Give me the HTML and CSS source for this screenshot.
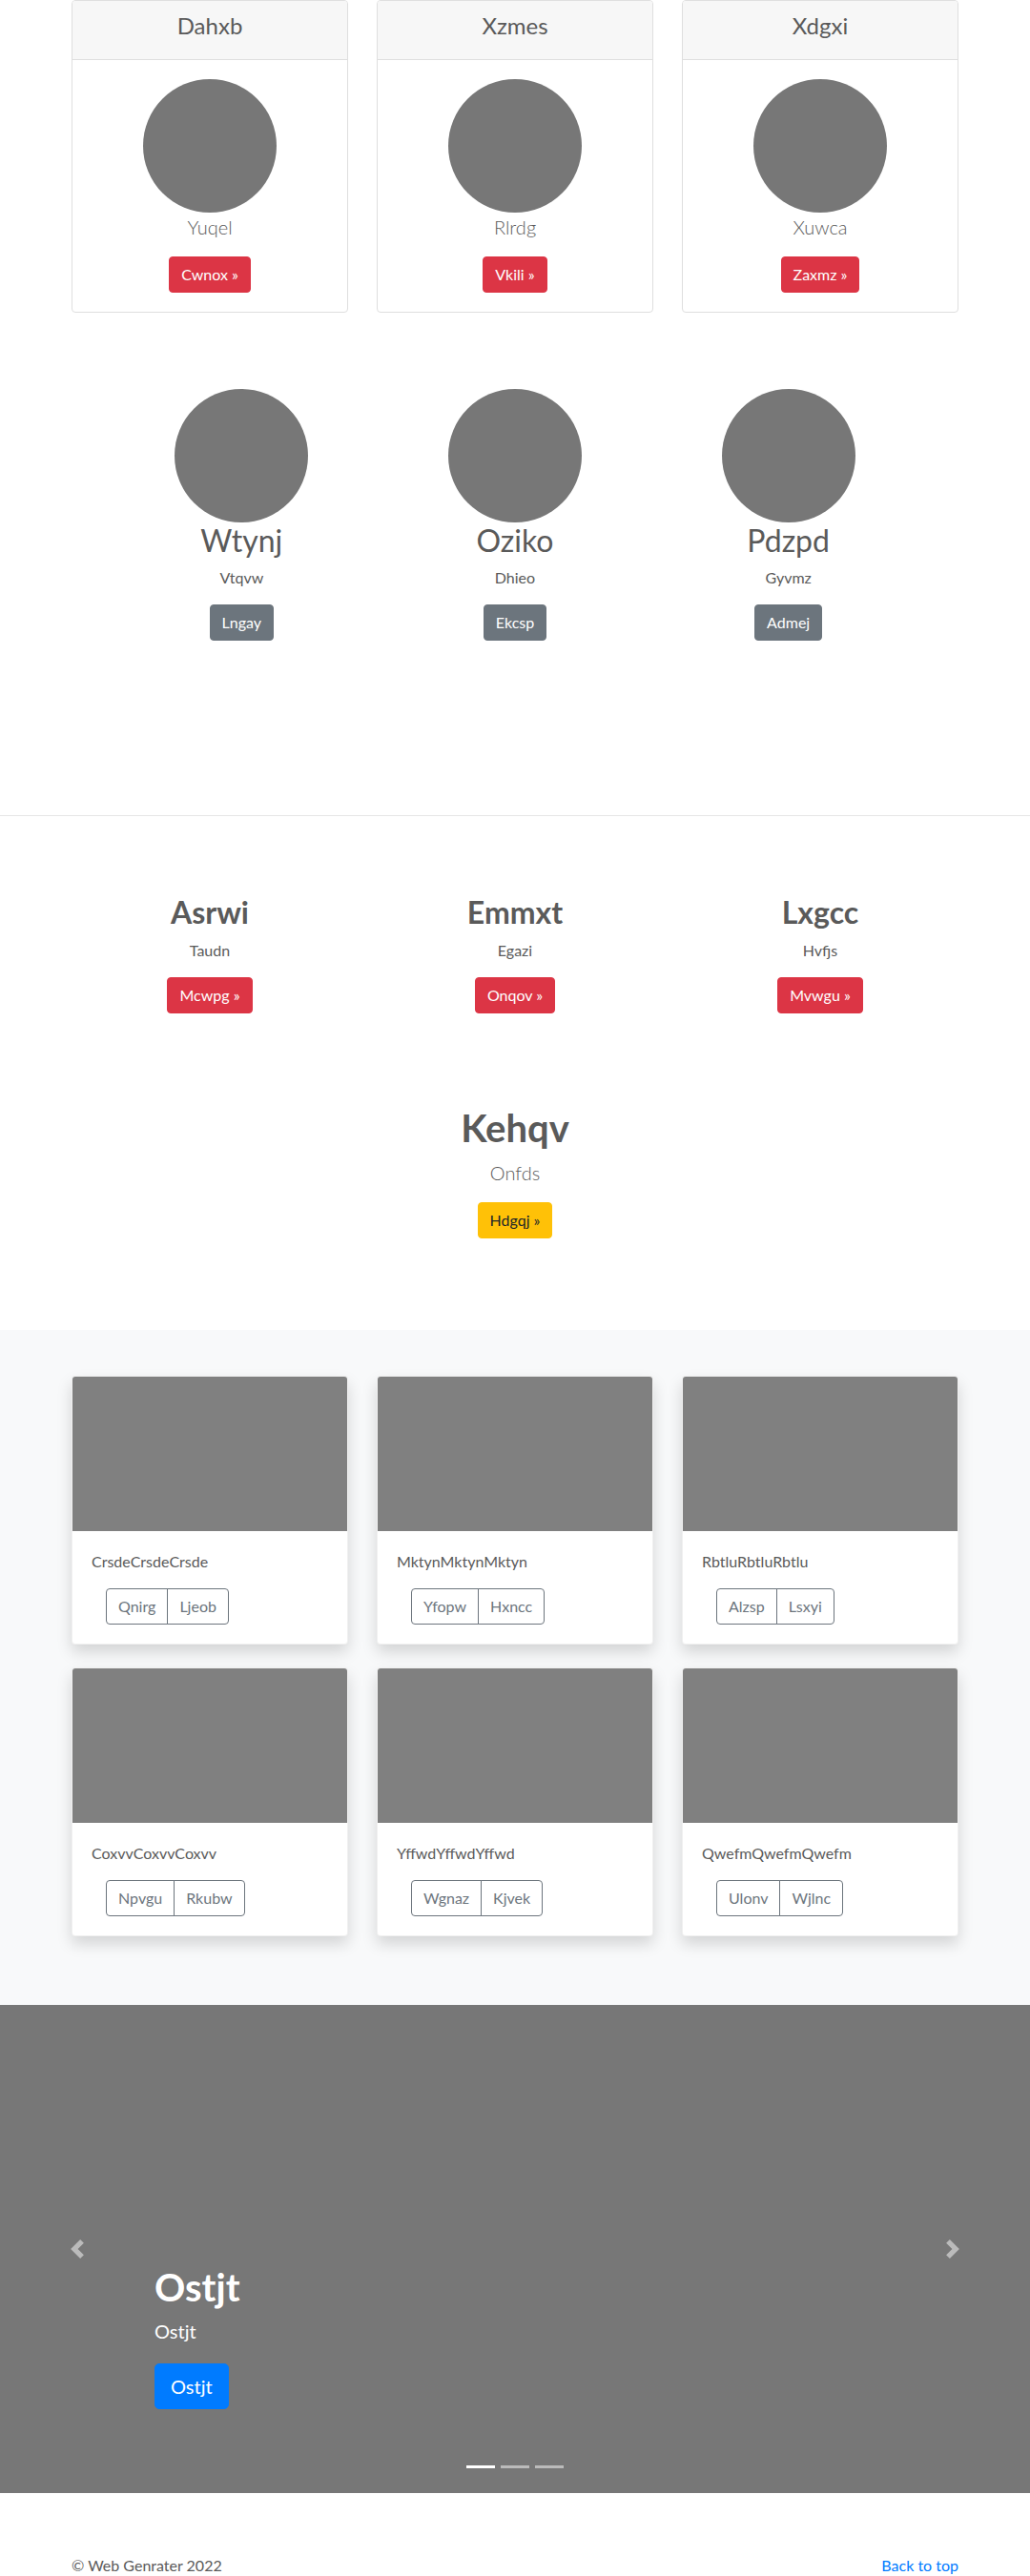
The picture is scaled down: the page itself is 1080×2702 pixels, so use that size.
FILE: index.html
```html
<!DOCTYPE html>
<html lang="en">
<head>
<meta charset="utf-8">
<title>Page</title>
<link rel="stylesheet" href="styles.css">
</head>
<body>
<main>
  <section class="pricing">
    <div class="container grid3">
      <div class="pcard">
        <div class="pcard-header"><h4>Dahxb</h4></div>
        <div class="pcard-body">
          <svg class="circle" width="140" height="140" viewBox="0 0 140 140"><circle cx="70" cy="70" r="70" fill="#777"/></svg>
          <p class="lead">Yuqel</p>
          <a class="btn btn-danger" href="#">Cwnox »</a>
        </div>
      </div>
      <div class="pcard">
        <div class="pcard-header"><h4>Xzmes</h4></div>
        <div class="pcard-body">
          <svg class="circle" width="140" height="140" viewBox="0 0 140 140"><circle cx="70" cy="70" r="70" fill="#777"/></svg>
          <p class="lead">Rlrdg</p>
          <a class="btn btn-danger" href="#">Vkili »</a>
        </div>
      </div>
      <div class="pcard">
        <div class="pcard-header"><h4>Xdgxi</h4></div>
        <div class="pcard-body">
          <svg class="circle" width="140" height="140" viewBox="0 0 140 140"><circle cx="70" cy="70" r="70" fill="#777"/></svg>
          <p class="lead">Xuwca</p>
          <a class="btn btn-danger" href="#">Zaxmz »</a>
        </div>
      </div>
    </div>
  </section>

  <section class="marketing">
    <div class="narrow grid3">
      <div class="mcol">
        <svg class="circle" width="140" height="140" viewBox="0 0 140 140"><circle cx="70" cy="70" r="70" fill="#777"/></svg>
        <h2 class="h2-light">Wtynj</h2>
        <p class="txt">Vtqvw</p>
        <a class="btn btn-secondary" href="#">Lngay</a>
      </div>
      <div class="mcol">
        <svg class="circle" width="140" height="140" viewBox="0 0 140 140"><circle cx="70" cy="70" r="70" fill="#777"/></svg>
        <h2 class="h2-light">Oziko</h2>
        <p class="txt">Dhieo</p>
        <a class="btn btn-secondary" href="#">Ekcsp</a>
      </div>
      <div class="mcol">
        <svg class="circle" width="140" height="140" viewBox="0 0 140 140"><circle cx="70" cy="70" r="70" fill="#777"/></svg>
        <h2 class="h2-light">Pdzpd</h2>
        <p class="txt">Gyvmz</p>
        <a class="btn btn-secondary" href="#">Admej</a>
      </div>
    </div>
  </section>

  <div class="divider"></div>

  <section class="features">
    <div class="container grid3">
      <div class="fcol">
        <h2 class="h2-med">Asrwi</h2>
        <p class="txt">Taudn</p>
        <a class="btn btn-danger" href="#">Mcwpg »</a>
      </div>
      <div class="fcol">
        <h2 class="h2-med">Emmxt</h2>
        <p class="txt">Egazi</p>
        <a class="btn btn-danger" href="#">Onqov »</a>
      </div>
      <div class="fcol">
        <h2 class="h2-med">Lxgcc</h2>
        <p class="txt">Hvfjs</p>
        <a class="btn btn-danger" href="#">Mvwgu »</a>
      </div>
    </div>
    <div class="container single">
      <h1 class="h1-med">Kehqv</h1>
      <p class="lead">Onfds</p>
      <a class="btn btn-warning" href="#">Hdgqj »</a>
    </div>
  </section>

  <section class="album">
    <div class="container grid3 album-grid">
      <div class="acard">
        <div class="aimg"></div>
        <div class="abody">
          <p class="txt">CrsdeCrsdeCrsde</p>
          <div class="btn-group"><a class="btn btn-outline" href="#">Qnirg</a><a class="btn btn-outline" href="#">Ljeob</a></div>
        </div>
      </div>
      <div class="acard">
        <div class="aimg"></div>
        <div class="abody">
          <p class="txt">MktynMktynMktyn</p>
          <div class="btn-group"><a class="btn btn-outline" href="#">Yfopw</a><a class="btn btn-outline" href="#">Hxncc</a></div>
        </div>
      </div>
      <div class="acard">
        <div class="aimg"></div>
        <div class="abody">
          <p class="txt">RbtluRbtluRbtlu</p>
          <div class="btn-group"><a class="btn btn-outline" href="#">Alzsp</a><a class="btn btn-outline" href="#">Lsxyi</a></div>
        </div>
      </div>
      <div class="acard">
        <div class="aimg"></div>
        <div class="abody">
          <p class="txt">CoxvvCoxvvCoxvv</p>
          <div class="btn-group"><a class="btn btn-outline" href="#">Npvgu</a><a class="btn btn-outline" href="#">Rkubw</a></div>
        </div>
      </div>
      <div class="acard">
        <div class="aimg"></div>
        <div class="abody">
          <p class="txt">YffwdYffwdYffwd</p>
          <div class="btn-group"><a class="btn btn-outline" href="#">Wgnaz</a><a class="btn btn-outline" href="#">Kjvek</a></div>
        </div>
      </div>
      <div class="acard">
        <div class="aimg"></div>
        <div class="abody">
          <p class="txt">QwefmQwefmQwefm</p>
          <div class="btn-group"><a class="btn btn-outline" href="#">Ulonv</a><a class="btn btn-outline" href="#">Wjlnc</a></div>
        </div>
      </div>
    </div>
  </section>

  <section class="carousel">
    <a class="ctrl ctrl-prev" href="#"><svg width="20" height="20" viewBox="0 0 8 8"><path fill="#fff" d="M5.25 0l-4 4 4 4 1.5-1.5L4.25 4l2.5-2.5L5.25 0z"/></svg></a>
    <a class="ctrl ctrl-next" href="#"><svg width="20" height="20" viewBox="0 0 8 8"><path fill="#fff" d="M2.75 0l-1.5 1.5L3.75 4l-2.5 2.5L2.75 8l4-4-4-4z"/></svg></a>
    <div class="caption">
      <h1 class="cap-title">Ostjt</h1>
      <p class="cap-text">Ostjt</p>
      <p class="cap-btn"><a class="btn btn-lg btn-primary" href="#">Ostjt</a></p>
    </div>
    <ol class="indicators">
      <li class="active"></li>
      <li></li>
      <li></li>
    </ol>
  </section>

  <footer class="container footer">
    <p>© Web Genrater 2022</p>
    <p><a class="link" href="#">Back to top</a></p>
  </footer>
</main>
</body>
</html>
```

FILE: styles.css
```css
* { box-sizing: border-box; }

html, body { margin: 0; padding: 0; }

body {
  font-family: Lato, "Open Sans", "Noto Sans", sans-serif;
  font-size: 16px;
  line-height: 1.5;
  color: #5a5a5a;
  background: #fff;
}

h1, h2, h4, p { margin: 0; }

.container {
  width: 960px;
  margin: 0 auto;
  padding: 0 15px;
}

.grid3 {
  display: grid;
  grid-template-columns: repeat(3, 1fr);
  column-gap: 30px;
}

.narrow {
  width: 860px;
  margin: 0 auto;
  column-gap: 0;
}

.circle { display: block; margin: 0 auto; }

.btn {
  display: inline-block;
  font-size: 16px;
  line-height: 24px;
  padding: 6px 12px;
  border: 1px solid transparent;
  border-radius: 4px;
  text-decoration: none;
  color: #fff;
  font-weight: 400;
  vertical-align: middle;
}
.btn-danger { background: #dc3545; border-color: #dc3545; }
.btn-secondary { background: #6c757d; border-color: #6c757d; }
.btn-warning { background: #ffc107; border-color: #ffc107; color: #212529; }
.btn-primary { background: #007bff; border-color: #007bff; }
.btn-lg { font-size: 20px; line-height: 30px; padding: 8px 16px; border-radius: 5px; }

.lead { font-size: 20px; font-weight: 300; line-height: 30px; margin-bottom: 16px; }
.txt { margin-bottom: 16px; }

/* pricing cards */
.pcard {
  border: 1px solid #dfdfdf;
  border-radius: 4px;
  background: #fff;
}
.pcard-header {
  background: #f7f7f7;
  border-bottom: 1px solid #dfdfdf;
  padding: 12px 20px;
  text-align: center;
  border-radius: 3px 3px 0 0;
}
.pcard-header h4 {
  font-size: 24px;
  font-weight: 400;
  line-height: 1.2;
  margin-bottom: 8px;
}
.pcard-body { padding: 20px; text-align: center; }

/* marketing */
.marketing { padding-top: 80px; padding-bottom: 183px; }
.mcol { text-align: center; }
.h2-light { font-size: 32px; font-weight: 400; line-height: 1.2; margin-bottom: 8px; }

.divider { border-top: 1px solid #e6e6e6; }

/* features */
.features { padding-top: 82px; padding-bottom: 96px; }
.fcol { text-align: center; }
.h2-med { font-size: 32px; font-weight: 700; line-height: 1.2; margin-bottom: 8px; }
.single { text-align: center; margin-top: 96px; }
.h1-med { font-size: 40px; font-weight: 700; line-height: 1.2; margin-bottom: 8px; }

/* album */
.album { background: #f8f9fa; padding: 48px 0; }
.album-grid { row-gap: 24px; padding-bottom: 24px; }
.acard {
  background: #fff;
  border: 1px solid rgba(0,0,0,.06);
  border-radius: 4px;
  box-shadow: 0 8px 16px rgba(0,0,0,.15);
  overflow: hidden;
}
.aimg { height: 162px; background: #808080; }
.abody { padding: 20px; }
.btn-group { display: flex; margin-left: 15px; }
.btn-outline {
  color: #6c757d;
  border-color: #6c757d;
  background: transparent;
}
.btn-group .btn-outline:first-child { border-radius: 4px 0 0 4px; }
.btn-group .btn-outline + .btn-outline { margin-left: -1px; border-radius: 0 4px 4px 0; }

/* carousel */
.carousel {
  position: relative;
  height: 512px;
  background: #777;
  margin-bottom: 64px;
}
.ctrl {
  position: absolute;
  top: 0;
  bottom: 0;
  width: 15%;
  display: flex;
  align-items: center;
  justify-content: center;
  opacity: .5;
}
.ctrl-prev { left: 0; }
.ctrl-next { right: 0; }
.caption {
  position: absolute;
  left: 15%;
  right: 15%;
  bottom: 48px;
  padding-bottom: 20px;
  color: #fff;
}
.cap-title { font-size: 40px; font-weight: 700; line-height: 1.2; margin-bottom: 8px; }
.cap-text { font-size: 20px; line-height: 1.4; margin-bottom: 20px; }
.cap-btn { font-size: 20px; line-height: 1.4; margin-bottom: 20px; }
.cap-btn .btn { vertical-align: top; }
.indicators {
  position: absolute;
  left: 0;
  right: 0;
  bottom: 0;
  margin: 0 15% 16px;
  padding: 0;
  list-style: none;
  display: flex;
  justify-content: center;
}
.indicators li {
  box-sizing: content-box;
  width: 30px;
  height: 3px;
  margin: 0 3px;
  background: #fff;
  background-clip: padding-box;
  border-top: 10px solid transparent;
  border-bottom: 10px solid transparent;
  opacity: .5;
}
.indicators li.active { opacity: 1; }

/* footer */
.footer { display: flex; justify-content: space-between; }
.footer p { margin-bottom: 16px; }
.link { color: #007bff; text-decoration: none; }
```
